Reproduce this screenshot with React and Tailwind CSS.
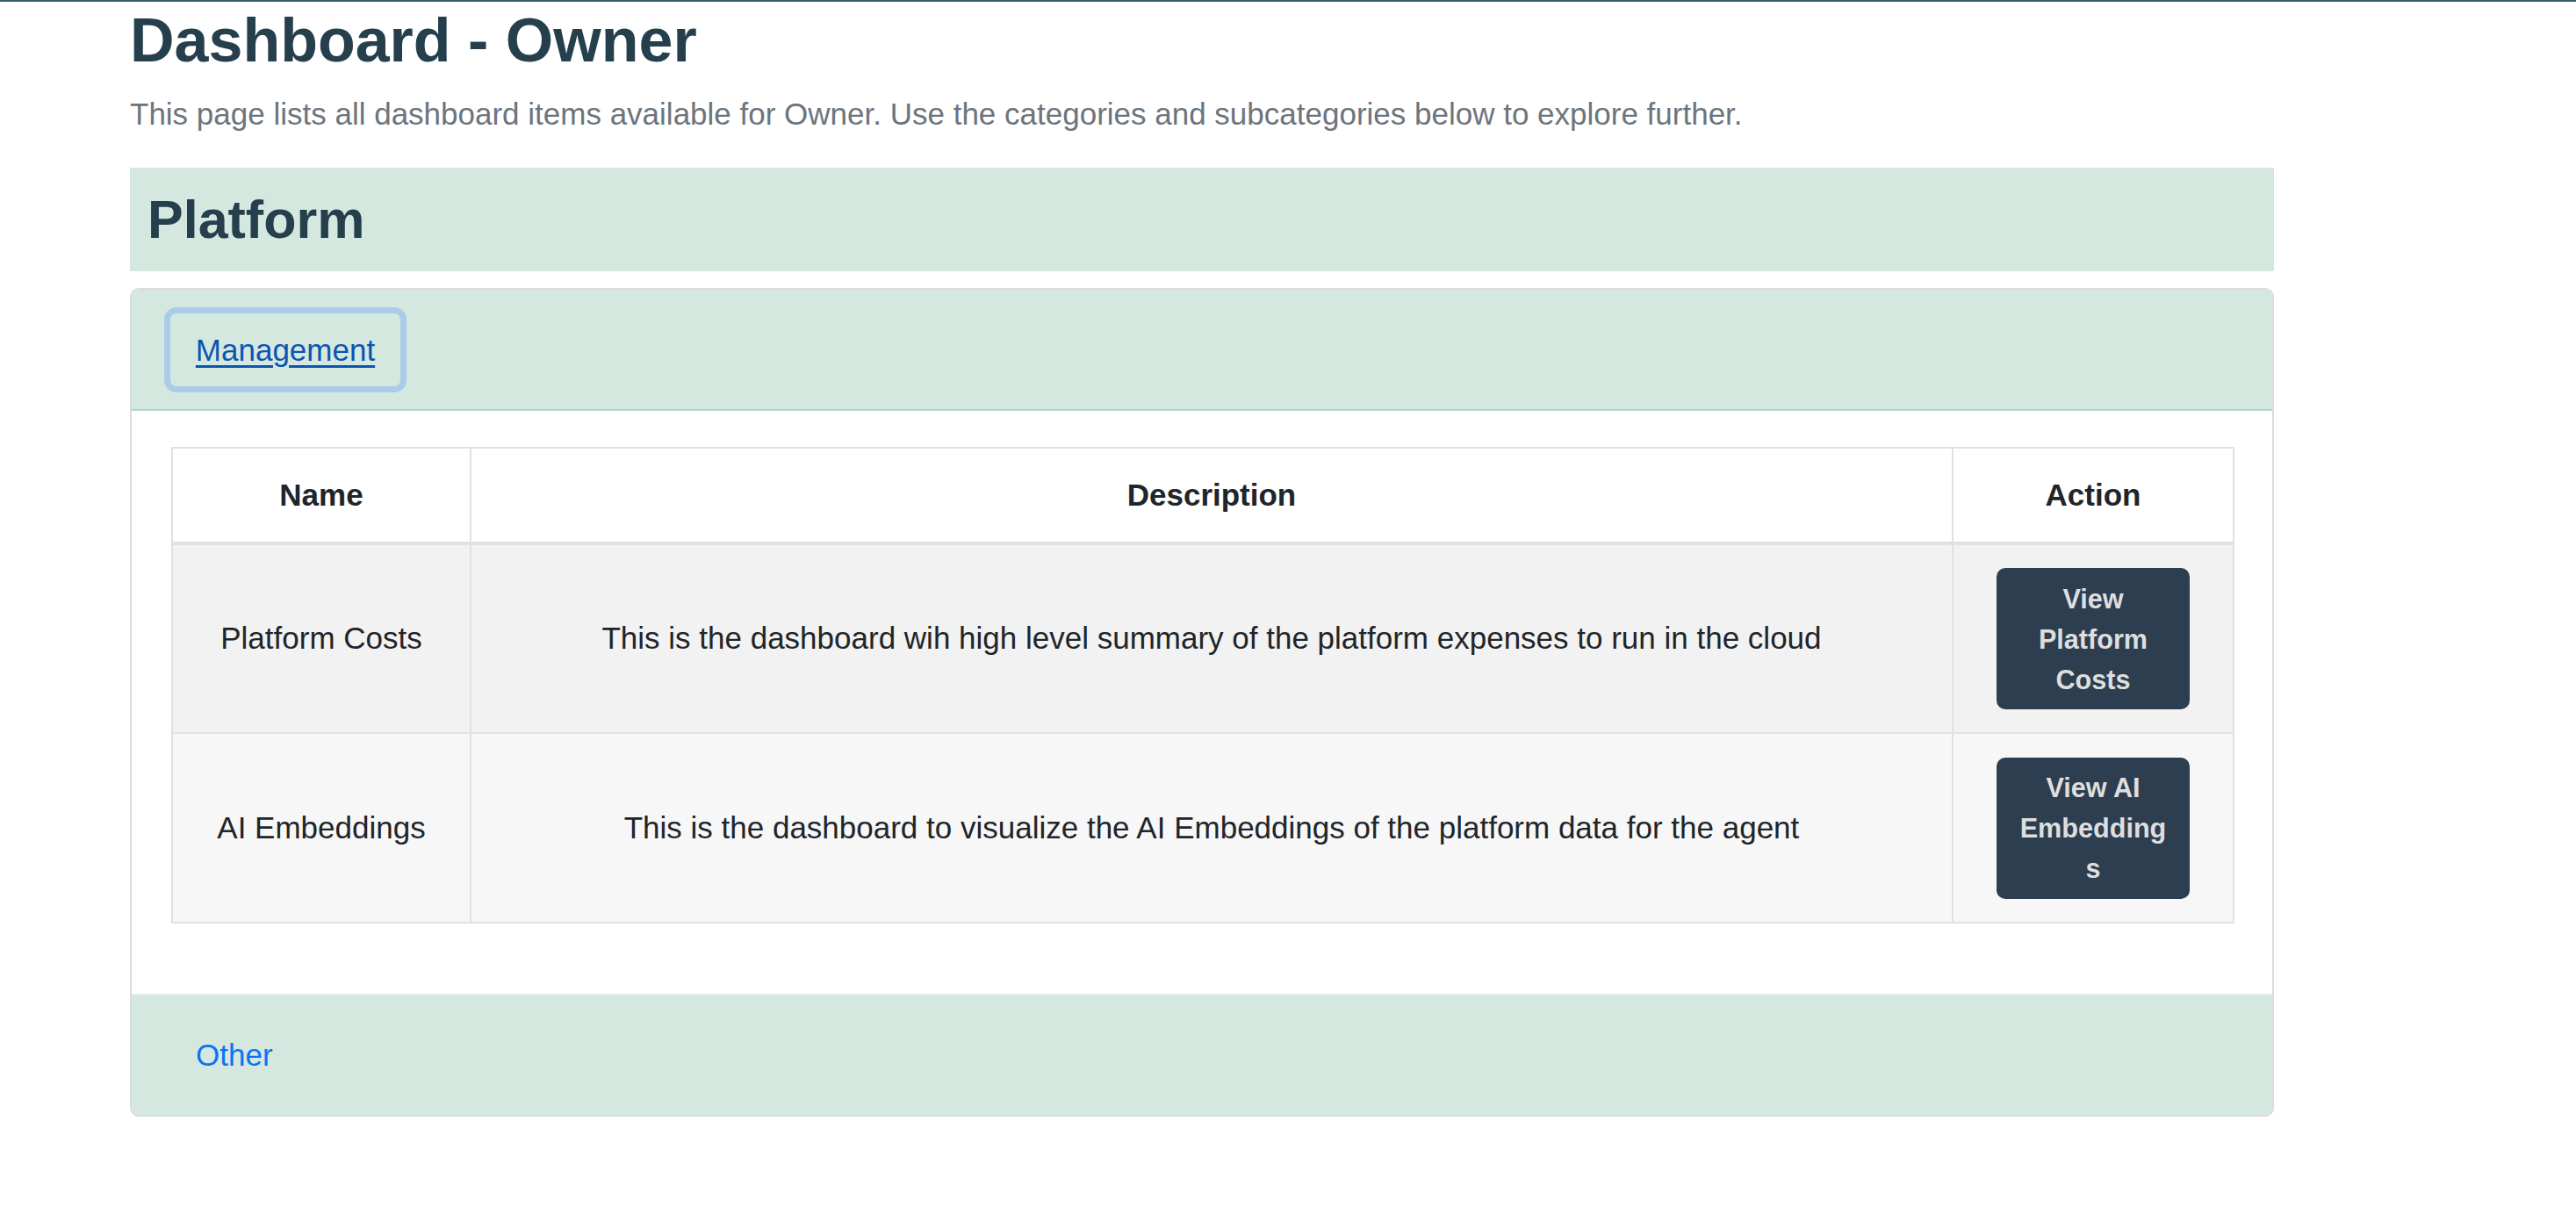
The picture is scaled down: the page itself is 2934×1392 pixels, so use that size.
import React from 'react';

const rows = [
  {
    name: 'Platform Costs',
    description: 'This is the dashboard wih high level summary of the platform expenses to run in the cloud',
    action: 'View Platform Costs',
    bg: 'bg-[#f2f2f2]',
  },
  {
    name: 'AI Embeddings',
    description: 'This is the dashboard to visualize the AI Embeddings of the platform data for the agent',
    action: 'View AI Embeddings',
    bg: 'bg-[#f7f7f7]',
  },
];

const DashboardTable = () => (
  <table className="w-[2348px] border-collapse border-2 border-[#dee2e6] text-[35px] text-[#212529] table-fixed">
    <thead>
      <tr className="h-[109px] bg-white border-b-4 border-[#dee2e6]">
        <th className="w-[340px] border-r-2 border-[#dee2e6] font-bold">Name</th>
        <th className="w-[1688px] border-r-2 border-[#dee2e6] font-bold">Description</th>
        <th className="w-[320px] font-bold">Action</th>
      </tr>
    </thead>
    <tbody>
      {rows.map((row) => (
        <tr key={row.name} className={`h-[216px] border-b-2 border-[#dee2e6] ${row.bg}`}>
          <td className="border-r-2 border-[#dee2e6] text-center">{row.name}</td>
          <td className="border-r-2 border-[#dee2e6] text-center">{row.description}</td>
          <td className="text-center">
            <button className="mx-auto w-[220px] h-[161px] px-[24px] rounded-[10px] bg-[#2c3e50] text-[#dedede] text-[30.6px] leading-[46px] font-bold text-center [overflow-wrap:anywhere]">
              {row.action}
            </button>
          </td>
        </tr>
      ))}
    </tbody>
  </table>
);

export default function App() {
  return (
    <div className="min-h-[1392px] bg-white border-t-2 border-[#3b5b6e] font-['Liberation_Sans',Arial,sans-serif]">
      <div className="ml-[148px] w-[2442px]">
        <h1 className="mt-[2px] text-[70px] leading-[84px] font-bold text-[#263f4d]">Dashboard - Owner</h1>
        <p className="mt-[16px] text-[35px] leading-[52px] text-[#6c757d]">
          This page lists all dashboard items available for Owner. Use the categories and subcategories below to explore further.
        </p>

        {/* category header */}
        <div className="mt-[35px] h-[118px] bg-[#d5e8e0] px-[20px] flex items-center">
          <h2 className="text-[61px] leading-[73px] font-bold text-[#263f4d]">Platform</h2>
        </div>

        {/* subcategory card */}
        <div className="mt-[19px] border-2 border-[#dcdcdc] rounded-[10px] overflow-hidden">
          <div className="h-[138px] bg-[#d5e8e0] border-b-2 border-[#bdd1c8] px-[37px] pt-[20px]">
            <button className="w-[276px] h-[97px] rounded-[14px] border-[7px] border-[#aacce9] flex items-center justify-center">
              <span className="text-[35px] leading-[52px] text-[#0b55b1] underline underline-offset-[5px] decoration-[3px]">Management</span>
            </button>
          </div>

          <div className="bg-white px-[45px] pt-[41px] pb-[80px]">
            <DashboardTable />
          </div>

          <div className="h-[138px] bg-[#d5e8e0] border-t-2 border-[#e3ebe7] px-[73px] flex items-center">
            <span className="text-[35px] leading-[52px] text-[#0a74f5]">Other</span>
          </div>
        </div>
      </div>
    </div>
  );
}
